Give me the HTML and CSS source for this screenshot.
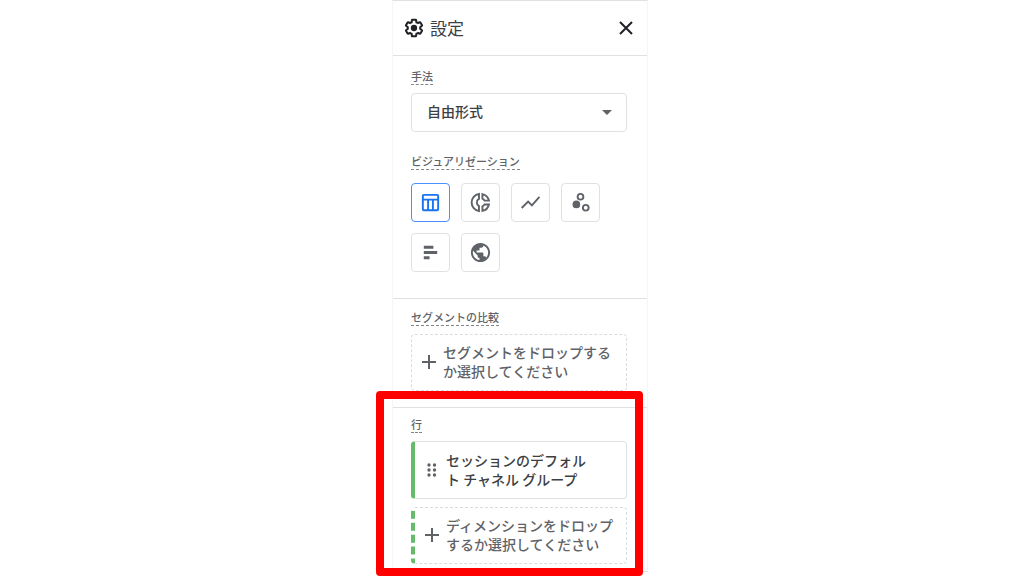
FILE: index.html
```
<!DOCTYPE html>
<html lang="ja">
<head>
  <meta charset="UTF-8">
  <meta name="viewport" content="width=device-width, initial-scale=1.0">
  <title>設定</title>
  <link rel="stylesheet" href="styles.css">
</head>
<body>
<main class="stage">
  <div class="panel">
    <header class="panel-header">
      <svg class="gear" viewBox="0 0 24 24" aria-hidden="true">
        <path d="M19.43 12.98c.04-.32.07-.64.07-.98 0-.34-.03-.66-.07-.98l2.11-1.65c.19-.15.24-.42.12-.64l-2-3.46c-.09-.16-.26-.25-.44-.25-.06 0-.12.01-.17.03l-2.49 1c-.52-.4-1.08-.73-1.69-.98l-.38-2.65C14.46 2.18 14.25 2 14 2h-4c-.25 0-.46.18-.49.42l-.38 2.65c-.61.25-1.17.59-1.69.98l-2.49-1c-.06-.02-.12-.03-.18-.03-.17 0-.34.09-.43.25l-2 3.46c-.13.22-.07.49.12.64l2.11 1.65c-.04.32-.07.65-.07.98 0 .33.03.66.07.98l-2.11 1.65c-.19.15-.24.42-.12.64l2 3.46c.09.16.26.25.44.25.06 0 .12-.01.17-.03l2.49-1c.52.4 1.08.73 1.69.98l.38 2.65c.03.24.24.42.49.42h4c.25 0 .46-.18.49-.42l.38-2.65c.61-.25 1.17-.59 1.69-.98l2.49 1c.06.02.12.03.18.03.17 0 .34-.09.43-.25l2-3.46c.12-.22.07-.49-.12-.64l-2.11-1.65z" fill="none" stroke="currentColor" stroke-width="2.4"/>
        <circle cx="12" cy="12" r="3.8" fill="currentColor"/>
      </svg>
      <h1 class="panel-title">設定</h1>
      <button class="close" type="button" aria-label="閉じる">
        <svg viewBox="0 0 14 14" aria-hidden="true"><path d="M1 1l12 12M13 1L1 13" stroke="currentColor" stroke-width="2"/></svg>
      </button>
    </header>

    <section class="section technique">
      <label class="label" for="technique">手法</label>
      <div class="select-box">
        <select id="technique">
          <option>自由形式</option>
        </select>
        <svg class="caret" viewBox="0 0 10 5" aria-hidden="true"><path d="M0 0h10L5 5z" fill="currentColor"/></svg>
      </div>

      <h2 class="label">ビジュアリゼーション</h2>
      <div class="charts">
        <button class="chart active" type="button" aria-label="テーブル">
          <svg viewBox="0 0 24 24" fill="none" stroke="currentColor" stroke-width="2">
            <rect x="4" y="4" width="16" height="16" rx="1"/>
            <path d="M4 9h16M9.500 9v11M14.500 9v11"/>
          </svg>
        </button>
        <button class="chart" type="button" aria-label="ドーナツ グラフ">
          <svg viewBox="0 0 24 24" fill="none" stroke="currentColor" stroke-width="2">
            <path d="M10.400 3.100a9 9 0 0 0 0 17.800v-5.200a4.200 4.200 0 0 1 0-7.400z"/>
            <path d="M14 3.200a9 9 0 0 1 6.800 6.800h-4.600a4.500 4.500 0 0 0-2.200-2.100z"/>
            <path d="M14 20.800a9 9 0 0 0 6.800-6.800h-4.600a4.500 4.500 0 0 1-2.200 2.100z"/>
          </svg>
        </button>
        <button class="chart" type="button" aria-label="折れ線グラフ">
          <svg viewBox="0 0 24 24" fill="none" stroke="currentColor" stroke-width="2">
            <path d="M2.800 17.700l6.700-6.700 4 4 7.800-8.800"/>
          </svg>
        </button>
        <button class="chart" type="button" aria-label="散布図">
          <svg viewBox="0 0 24 24" fill="none" stroke="currentColor" stroke-width="2">
            <circle cx="12" cy="6" r="3"/>
            <circle cx="17.500" cy="17.500" r="3"/>
            <circle cx="7.700" cy="14" r="4" fill="currentColor" stroke="none"/>
          </svg>
        </button>
        <button class="chart" type="button" aria-label="棒グラフ">
          <svg viewBox="0 0 24 24" fill="currentColor">
            <path d="M5 5h10v3H5zM5 10.500h14v3H5zM5 16h6v3H5z"/>
          </svg>
        </button>
        <button class="chart" type="button" aria-label="地図">
          <svg viewBox="0 0 24 24" fill="currentColor">
            <path d="M12 2C6.480 2 2 6.480 2 12s4.480 10 10 10 10-4.480 10-10S17.520 2 12 2zm-1 17.930c-3.950-.49-7-3.850-7-7.930 0-.62.08-1.210.21-1.790L9 15v1c0 1.100.9 2 2 2v1.930zm6.900-2.540c-.26-.81-1-1.390-1.900-1.390h-1v-3c0-.55-.45-1-1-1H8v-2h2c.55 0 1-.45 1-1V7h2c1.100 0 2-.9 2-2v-.41c2.930 1.190 5 4.060 5 7.410 0 2.080-.8 3.970-2.100 5.390z"/>
          </svg>
        </button>
      </div>
    </section>

    <section class="section segments">
      <h2 class="label">セグメントの比較</h2>
      <button class="drop" type="button">
        <svg class="plus" viewBox="0 0 14 14" aria-hidden="true"><path d="M7 0v14M0 7h14" stroke="currentColor" stroke-width="2"/></svg>
        <span>セグメントをドロップする<br>か選択してください</span>
      </button>
    </section>

    <section class="section rows">
      <h2 class="label">行</h2>
      <button class="chip" type="button">
        <svg class="grip" viewBox="0 0 10 14" fill="currentColor" aria-hidden="true">
          <circle cx="2" cy="2" r="1.700"/><circle cx="7.500" cy="2" r="1.700"/>
          <circle cx="2" cy="7" r="1.700"/><circle cx="7.500" cy="7" r="1.700"/>
          <circle cx="2" cy="12" r="1.700"/><circle cx="7.500" cy="12" r="1.700"/>
        </svg>
        <span>セッションのデフォル<br>ト チャネル グループ</span>
      </button>
      <button class="drop dimension" type="button">
        <svg class="plus" viewBox="0 0 14 14" aria-hidden="true"><path d="M7 0v14M0 7h14" stroke="currentColor" stroke-width="2"/></svg>
        <span>ディメンションをドロップ<br>するか選択してください</span>
      </button>
      <div class="highlight"></div>
    </section>
  </div>
</main>
</body>
</html>
```

FILE: styles.css
```
* {
  box-sizing: border-box;
}

body {
  margin: 0;
  background: #fff;
  color: #3c4043;
  font-family: "Noto Sans CJK JP", sans-serif;
  font-size: 14px;
}

button,
select {
  font: inherit;
  color: inherit;
  background: #fff;
  cursor: pointer;
}

.stage {
  max-width: 272px;
  min-height: 100vh;
  margin: 0 auto;
  padding-left: 16px;
}

.panel {
  border: 1px solid #f5f5f6;
  border-top-color: #dfe1e5;
  border-bottom-color: #dfe1e5;
}

.panel-header {
  display: flex;
  align-items: center;
  gap: 6px;
  padding: 14px 14px 14px 11px;
}

.gear {
  width: 20px;
  height: 20px;
  color: #202124;
  overflow: visible;
}

.panel-title {
  flex: 1;
  margin: 0;
  font-size: 17px;
  font-weight: 400;
  line-height: 26px;
}

.close {
  display: flex;
  padding: 0;
  border: 0;
  color: #202124;
}

.close svg {
  width: 14px;
  height: 14px;
}

.section {
  padding: 8px 20px 16px 18px;
  border-top: 1px solid #dfe1e5;
}

.label {
  display: block;
  width: fit-content;
  margin: 0 0 8px;
  border-bottom: 1px dashed #80868b;
  color: #5f6368;
  font-size: 11px;
  font-weight: 500;
  line-height: 16px;
}

.technique {
  padding-top: 12px;
  padding-bottom: 26px;
}

.select-box {
  position: relative;
  margin-bottom: 21px;
}

.select-box select {
  display: block;
  width: 100%;
  height: 39px;
  padding: 0 32px 4px 15px;
  border: 1px solid #dfe1e5;
  border-radius: 4px;
  appearance: none;
  font-weight: 500;
}

.caret {
  position: absolute;
  top: 17px;
  right: 15px;
  width: 10px;
  height: 5px;
  color: #5f6368;
  pointer-events: none;
}

.charts {
  display: flex;
  flex-wrap: wrap;
  gap: 11px;
  padding-top: 5px;
}

.chart {
  display: flex;
  align-items: center;
  justify-content: center;
  width: 39px;
  height: 39px;
  padding: 0;
  border: 1px solid #dfe1e5;
  border-radius: 4px;
  color: #5f6368;
}

.chart svg {
  width: 23px;
  height: 23px;
}

.chart.active {
  border-color: #4a90ff;
  color: #1a73f0;
}

.segments {
  padding-top: 10px;
}

.drop,
.chip {
  display: flex;
  align-items: center;
  width: 100%;
  padding: 8px 0 9px 10px;
  border: 1px dashed #dadce0;
  border-radius: 4px;
  font-weight: 500;
  line-height: 19px;
  text-align: left;
  white-space: nowrap;
}

.drop {
  gap: 7px;
  color: #5f6368;
}

.plus {
  width: 14px;
  height: 14px;
}

.chip {
  gap: 9px;
  margin-bottom: 8px;
  padding: 9px 0 9px 12px;
  border: 1px solid #dfe1e5;
  border-left: 4px solid #66bb6a;
}

.grip {
  width: 10px;
  height: 14px;
  color: #5f6368;
}

.dimension {
  border-left: 4px dashed #66bb6a;
}

.rows {
  position: relative;
  padding-bottom: 7px;
}

/* red frame drawn over the rows section */
.highlight {
  position: absolute;
  top: -17px;
  right: 4px;
  bottom: -5px;
  left: -17px;
  border: 8px solid #f00;
  border-radius: 4px;
  pointer-events: none;
}
```
